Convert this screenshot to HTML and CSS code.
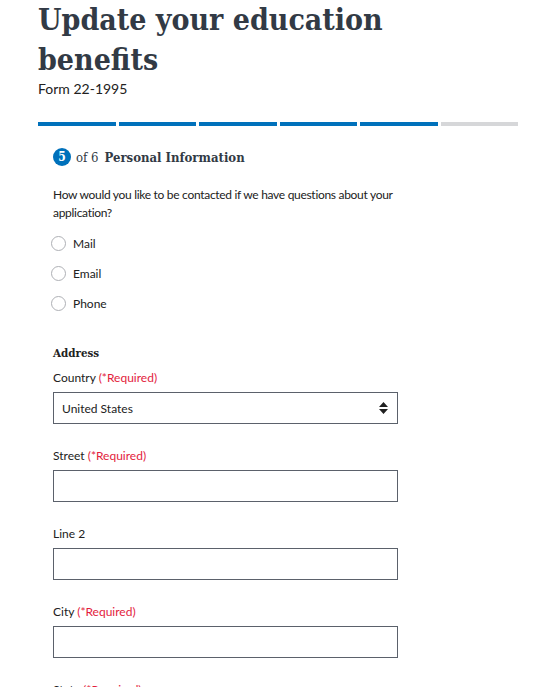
FILE: index.html
```html
<!DOCTYPE html>
<html>
<head>
<meta charset="utf-8">
<link rel="stylesheet" href="styles.css">
</head>
<body>
<div class="page">
  <h1 class="title">Update your education benefits</h1>
  <div class="form-num">Form 22-1995</div>
  <div class="progress">
    <span class="seg done"></span><span class="seg done"></span><span class="seg done"></span><span class="seg done"></span><span class="seg done"></span><span class="seg"></span>
  </div>
  <div class="form-body">
    <div class="step">
      <span class="step-num">5</span><span class="step-of">of 6</span><span class="step-name">Personal Information</span>
    </div>
    <p class="question">How would you like to be contacted if we have questions about your application?</p>
    <div class="radios">
      <label class="radio"><span class="dot"></span>Mail</label>
      <label class="radio"><span class="dot"></span>Email</label>
      <label class="radio"><span class="dot"></span>Phone</label>
    </div>
    <h4 class="section">Address</h4>
    <div class="field first">
      <div class="label">Country <span class="req">(*Required)</span></div>
      <div class="select">United States
        <svg class="arrows" width="9" height="12" viewBox="0 0 9 12"><path d="M4.5 0 L9 5 H0 Z M0 7 H9 L4.5 12 Z" fill="#212121"/></svg>
      </div>
    </div>
    <div class="field">
      <div class="label">Street <span class="req">(*Required)</span></div>
      <div class="input"></div>
    </div>
    <div class="field">
      <div class="label">Line 2</div>
      <div class="input"></div>
    </div>
    <div class="field">
      <div class="label">City <span class="req">(*Required)</span></div>
      <div class="input"></div>
    </div>
    <div class="field">
      <div class="label">State <span class="req">(*Required)</span></div>
      <div class="input"></div>
    </div>
  </div>
</div>
</body>
</html>
```
FILE: styles.css
```css
html, body { margin: 0; padding: 0; background: #fff; }
body { font-family: "Lato", "Noto Sans", sans-serif; color: #212121; overflow: hidden; height: 687px; }
.page { padding-left: 38px; width: 480px; }
.title {
  font-family: "DejaVu Serif Condensed", "DejaVu Serif", serif;
  font-weight: bold; font-size: 30px; line-height: 40px;
  color: #323a45; margin: 0; padding-top: 0; width: 400px;
}
.form-num { font-size: 14px; line-height: 18px; margin-top: 0; color: #212121; }
.progress { display: flex; gap: 3px; margin-top: 24px; }
.seg { flex: 1; height: 4px; background: #d6d7d9; }
.seg.done { background: #0071bb; }
.form-body { padding-left: 15px; width: 345px; }
.step { display: flex; align-items: center; margin-top: 22px; height: 18px; font-family: "DejaVu Serif Condensed", "DejaVu Serif", serif; font-size: 13px; color: #323a45; }
.step-num { width: 18px; height: 18px; border-radius: 50%; background: #0071bb; color: #fff; font-weight: bold; font-size: 12px; display: flex; align-items: center; justify-content: center; margin-right: 5px; }
.step-of { margin-right: 6px; }
.step-name { font-weight: bold; }
.question { font-size: 12px; line-height: 18px; margin: 20px 0 0; letter-spacing: -0.3px; }
.radios { display: flex; flex-direction: column; gap: 12px; margin-top: 12px; }
.radio { display: flex; align-items: center; font-size: 12px; height: 18px; margin-left: -2px; }
.dot { width: 13px; height: 13px; border: 1px solid #aeb0b5; border-radius: 50%; margin-right: 7px; box-sizing: content-box; }
.section { font-family: "DejaVu Serif Condensed", "DejaVu Serif", serif; font-weight: bold; font-size: 11.5px; line-height: 18px; color: #212121; margin: 32px 0 0; }
.field { margin-top: 23px; }
.field.first { margin-top: 7px; }
.label { font-size: 12px; line-height: 18px; color: #212121; }
.req { color: #e31c3d; }
.select, .input { box-sizing: border-box; height: 32px; border: 1.5px solid #5b616b; margin-top: 5px; width: 345px; }
.select { display: flex; align-items: center; justify-content: space-between; padding: 0 9px 0 8px; font-size: 12px; }
.arrows { display: block; }
```
